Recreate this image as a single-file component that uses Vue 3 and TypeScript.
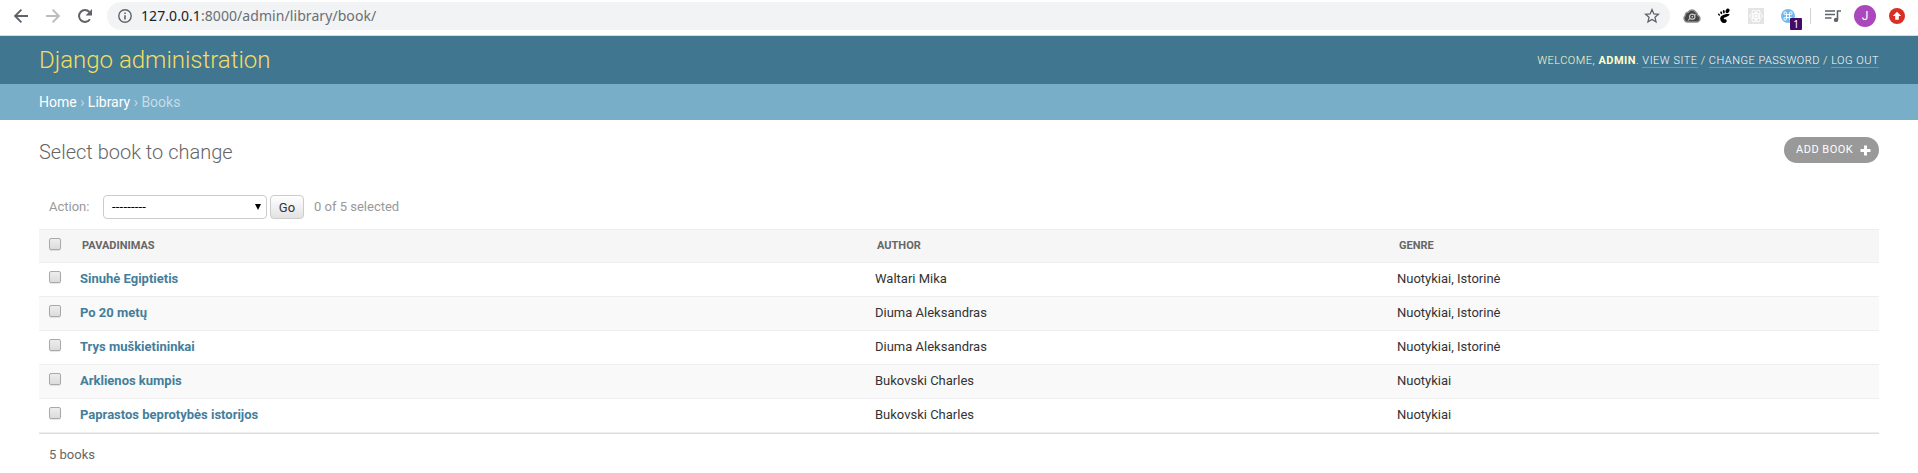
<script setup lang="ts">
import { ref } from 'vue'

interface Book {
  id: number
  title: string
  author: string
  genre: string
}

const books: Book[] = [
  { id: 1, title: 'Sinuhė Egiptietis', author: 'Waltari Mika', genre: 'Nuotykiai, Istorinė' },
  { id: 2, title: 'Po 20 metų', author: 'Diuma Aleksandras', genre: 'Nuotykiai, Istorinė' },
  { id: 3, title: 'Trys muškietininkai', author: 'Diuma Aleksandras', genre: 'Nuotykiai, Istorinė' },
  { id: 4, title: 'Arklienos kumpis', author: 'Bukovski Charles', genre: 'Nuotykiai' },
  { id: 5, title: 'Paprastos beprotybės istorijos', author: 'Bukovski Charles', genre: 'Nuotykiai' },
]

const selected = ref<number[]>([])

function toggleAll(event: Event) {
  selected.value = (event.target as HTMLInputElement).checked ? books.map((b) => b.id) : []
}
</script>

<template>
  <div class="window">
    <div class="toolbar">
      <span class="slot">
        <svg width="16" height="16" viewBox="0 0 16 16" fill="none" stroke="#5f6368" stroke-width="1.9"><path d="M15 8H2.3M8.4 1.7L2.1 8l6.3 6.3" /></svg>
      </span>
      <span class="slot">
        <svg width="16" height="16" viewBox="0 0 16 16" fill="none" stroke="#babcbe" stroke-width="1.9"><path d="M1 8h12.7M7.6 1.7L13.9 8l-6.3 6.3" /></svg>
      </span>
      <span class="slot">
        <svg width="16" height="16" viewBox="0 0 16 16"><path d="M12.9 11.2A5.9 5.9 0 1 1 12.3 4" fill="none" stroke="#5f6368" stroke-width="2" /><path d="M15 1v6.4H8.6z" fill="#5f6368" /></svg>
      </span>
      <div class="address">
        <svg class="info" width="14" height="14" viewBox="0 0 14 14"><circle cx="7" cy="7" r="6.2" fill="none" stroke="#5f6368" stroke-width="1.4" /><path d="M6.2 6.2h1.6v4.2H6.2zM6.2 3.5h1.6v1.6H6.2z" fill="#5f6368" /></svg>
        <span class="url"><b>127.0.0.1</b>:8000/admin/library/book/</span>
        <svg class="star" width="16" height="16" viewBox="0 0 16 16"><path d="M8 1.6l1.85 4.3 4.65.4-3.53 3.05 1.08 4.55L8 11.5l-4.05 2.4 1.08-4.55L1.5 6.3l4.65-.4z" fill="none" stroke="#5f6368" stroke-width="1.3" /></svg>
      </div>
      <span class="slot">
        <svg width="18" height="16" viewBox="0 0 18 16"><path d="M4 14A3.700 3.700 0 0 1 2.300 7.600A3 3 0 0 1 5.300 4.200A4.200 4.200 0 0 1 12.500 3.900A4.300 4.300 0 0 1 14.600 7.300A3.500 3.500 0 0 1 14.300 14z" fill="#444" stroke="#8c8c8c" stroke-width="1.400" /><ellipse cx="9.200" cy="8.700" rx="2.700" ry="2.500" fill="#333" stroke="#ccc" stroke-width="1.200" /><path d="M7 10.500l-2 1.800M11.500 7l1.200-.8" stroke="#bbb" stroke-width="1.100" /><circle cx="9.300" cy="8.700" r=".9" fill="#ccc" /></svg>
      </span>
      <span class="slot">
        <svg width="14" height="16" viewBox="0 0 14 16" fill="#000"><ellipse cx="10.500" cy="2.900" rx="2.400" ry="1.800" transform="rotate(-60 10.500 2.900)" /><ellipse cx="6.800" cy="3.700" rx="1" ry="1.700" transform="rotate(-8 6.800 3.700)" /><ellipse cx="4.200" cy="4.800" rx=".9" ry="1.500" transform="rotate(-20 4.200 4.800)" /><ellipse cx="2" cy="6.600" rx=".8" ry="1.300" transform="rotate(-35 2 6.600)" /><path d="M12 6.100C9.500 5.400 3.100 7 3.200 10.400c0 2.500 2.200 5 4.400 4.600c2.200-.3 2.800-2.600 1.500-3.500c-.8-.5-1.400.1-2.100-.4c-1-1 .5-1.500 2-2c2-.6 4.600-2.400 3-3z" /></svg>
      </span>
      <span class="slot">
        <svg width="16" height="16" viewBox="0 0 16 16"><rect width="16" height="16" fill="#e4e4e4" /><g fill="none" stroke="#fff" stroke-width=".9"><ellipse cx="8" cy="8" rx="6.500" ry="2.500" /><ellipse cx="8" cy="8" rx="6.500" ry="2.500" transform="rotate(60 8 8)" /><ellipse cx="8" cy="8" rx="6.500" ry="2.500" transform="rotate(120 8 8)" /></g><circle cx="8" cy="8" r="1.300" fill="#fff" /></svg>
      </span>
      <span class="slot">
        <svg width="14" height="14" viewBox="0 0 14 14"><circle cx="7" cy="7" r="7" fill="#74b9ee" /><path d="M5.500 5.500h3v3h-3zM5.500 5.500H4.200a1.300 1.300 0 1 1 1.300-1.300zM8.500 5.500V4.200a1.300 1.300 0 1 1 1.300 1.300zM8.500 8.500h1.300a1.300 1.300 0 1 1-1.300 1.300zM5.500 8.500v1.300a1.300 1.300 0 1 1-1.300-1.300z" fill="none" stroke="#fff" stroke-width="1" /></svg>
        <span class="badge">1</span>
      </span>
      <span class="divider"></span>
      <span class="slot">
        <svg width="16" height="14" viewBox="0 0 16 14"><path d="M0 2h10M0 5.500h10M0 9h6.500" stroke="#5f6368" stroke-width="1.500" fill="none" /><path d="M12.500 11V2H16" stroke="#5f6368" stroke-width="1.600" fill="none" /><circle cx="11" cy="10.900" r="2.200" fill="#5f6368" /></svg>
      </span>
      <span class="slot"><span class="avatar">J</span></span>
      <span class="slot">
        <svg width="16" height="16" viewBox="0 0 16 16"><circle cx="8" cy="8" r="8" fill="#d93025" /><path d="M8 3.700l4.200 4.400H9.800v3.600H6.200V8.100H3.800z" fill="#fff" /></svg>
      </span>
    </div>

    <header class="header">
      <h1>Django administration</h1>
      <div class="user-tools">
        Welcome, <strong>admin</strong>. <a>View site</a> / <a>Change password</a> / <a>Log out</a>
      </div>
    </header>

    <nav class="breadcrumbs"><a>Home</a> › <a>Library</a> › Books</nav>

    <main class="content">
      <div class="title-row">
        <h2>Select book to change</h2>
        <a class="add">Add book
          <svg width="11" height="11" viewBox="0 0 11 11"><path d="M5.500 .5v10M.5 5.500h10" stroke="#fff" stroke-width="3" /></svg>
        </a>
      </div>

      <div class="actions">
        <label>Action:</label>
        <div class="select">
          <span>---------</span>
          <svg width="6" height="6" viewBox="0 0 6 6"><path d="M0 0h6L3 6z" fill="#000" /></svg>
        </div>
        <button type="button">Go</button>
        <span class="count">{{ selected.length }} of {{ books.length }} selected</span>
      </div>

      <div class="table">
        <div class="row head">
          <span class="check"><input type="checkbox" @change="toggleAll" /></span>
          <span>Pavadinimas</span>
          <span>Author</span>
          <span>Genre</span>
        </div>
        <div v-for="book in books" :key="book.id" class="row">
          <span class="check"><input v-model="selected" type="checkbox" :value="book.id" /></span>
          <a>{{ book.title }}</a>
          <span>{{ book.author }}</span>
          <span>{{ book.genre }}</span>
        </div>
      </div>

      <p class="paginator">{{ books.length }} books</p>
    </main>
  </div>
</template>

<style>
body {
  margin: 0;
  background: #fff;
}
</style>

<style scoped>
.window {
  height: 473px;
  overflow: hidden;
  box-sizing: border-box;
  background: #fff;
  color: #333;
  font: 13px/16px Roboto, "Liberation Sans", sans-serif;
}
.toolbar {
  display: flex;
  align-items: flex-start;
  height: 35px;
  padding: 0 5px;
  border-bottom: 1px solid #d9dbdc;
}
.slot {
  position: relative;
  display: flex;
  flex: none;
  align-items: center;
  justify-content: center;
  width: 32px;
  height: 32px;
}
.address {
  display: flex;
  flex: 1;
  align-items: center;
  height: 28px;
  margin: 2px 6px 0;
  padding: 0 10px 0 11px;
  border-radius: 14px;
  background: #f1f3f4;
}
.url {
  flex: 1;
  margin-left: 9px;
  color: #6b6f73;
  font: 14px/20px "Noto Sans", sans-serif;
  letter-spacing: 0.07px;
}
.url b {
  color: #202124;
  font-weight: 400;
}
.badge {
  position: absolute;
  left: 18px;
  top: 18px;
  width: 12px;
  height: 12px;
  border-radius: 1px;
  background: #440a67;
  color: #fff;
  font: 10px/12px "Noto Sans", sans-serif;
  text-align: center;
}
.divider {
  width: 1px;
  height: 16px;
  margin: 8px 6px 0;
  background: #cfd1d3;
}
.avatar {
  width: 22px;
  height: 22px;
  border-radius: 50%;
  background: #ab47bc;
  color: #fff;
  font-size: 12px;
  line-height: 22px;
  text-align: center;
}
.header {
  display: flex;
  align-items: center;
  justify-content: space-between;
  height: 48px;
  padding: 0 39px;
  background: #417690;
  color: #ffc;
}
.header h1 {
  margin: 0;
  color: #f5dd5d;
  font-size: 24px;
  font-weight: 300;
  line-height: 28px;
}
.user-tools {
  padding-top: 2px;
  font-size: 11px;
  font-weight: 300;
  letter-spacing: 0.5px;
  line-height: 14px;
  text-transform: uppercase;
}
.user-tools strong {
  font-weight: 700;
}
.user-tools a {
  border-bottom: 1px solid rgba(255, 255, 255, 0.25);
  color: #fff;
}
.breadcrumbs {
  height: 36px;
  padding: 0 39px;
  background: #79aec8;
  color: #c4dce8;
  font-size: 14px;
  line-height: 36px;
}
.breadcrumbs a {
  color: #fff;
}
.content {
  padding: 17px 39px 0;
}
.title-row {
  display: flex;
  justify-content: space-between;
  height: 58px;
}
.title-row h2 {
  margin: 3px 0 0;
  color: #666;
  font-size: 20px;
  font-weight: 300;
  line-height: 24px;
}
.add {
  display: flex;
  align-items: center;
  justify-content: space-between;
  box-sizing: border-box;
  width: 95px;
  height: 26px;
  padding: 0 8px 1px 12px;
  border-radius: 13px;
  background: #999;
  color: #fff;
  font-size: 11px;
  letter-spacing: 0.5px;
  text-transform: uppercase;
}
.add svg {
  position: relative;
  top: 1px;
}
.actions {
  display: flex;
  align-items: center;
  height: 24px;
  margin-bottom: 10px;
  padding-left: 10px;
  color: #999;
}
.actions label {
  width: 54px;
}
.select {
  display: flex;
  align-items: center;
  justify-content: space-between;
  box-sizing: border-box;
  width: 164px;
  height: 24px;
  padding: 0 5px 0 8px;
  border: 1px solid #ccc;
  border-radius: 4px;
  background: #fff;
  color: #000;
}
.select span {
  letter-spacing: 0.2px;
}
.actions button {
  box-sizing: border-box;
  width: 34px;
  height: 24px;
  margin: 0 10px 0 3px;
  padding: 2px 0 0;
  border: 1px solid #ccc;
  border-radius: 4px;
  background: #fff linear-gradient(#fff, #e2e2e2);
  color: #333;
  font: 13px/16px Roboto, sans-serif;
}
.table {
  border-top: 1px solid #eee;
  border-bottom: 1px solid #ddd;
}
.row {
  display: grid;
  grid-template-columns: 33px 795px 522px 1fr;
  box-sizing: border-box;
  height: 34px;
  border-bottom: 1px solid #eee;
}
.row > * {
  padding: 8px;
}
.row:nth-child(odd) {
  background: #f9f9f9;
}
.row a {
  color: #447e9b;
  font-weight: 700;
}
.row.head {
  height: 33px;
  background: #f6f6f6;
  color: #666;
  font-size: 11px;
  font-weight: 700;
  text-transform: uppercase;
}
.row.head > * {
  padding-left: 10px;
}
.row > .check {
  padding: 8px 0 0 10px;
  line-height: 0;
}
.check input {
  appearance: none;
  box-sizing: border-box;
  width: 12px;
  height: 12px;
  margin: 0;
  border: 1px solid #a9a9a9;
  border-radius: 2px;
  background: linear-gradient(#ededed, #dcdcdc);
  box-shadow: 0 1px 1px rgba(0, 0, 0, 0.1);
}
.paginator {
  margin: 0;
  padding: 13px 10px;
  color: #666;
}
</style>
